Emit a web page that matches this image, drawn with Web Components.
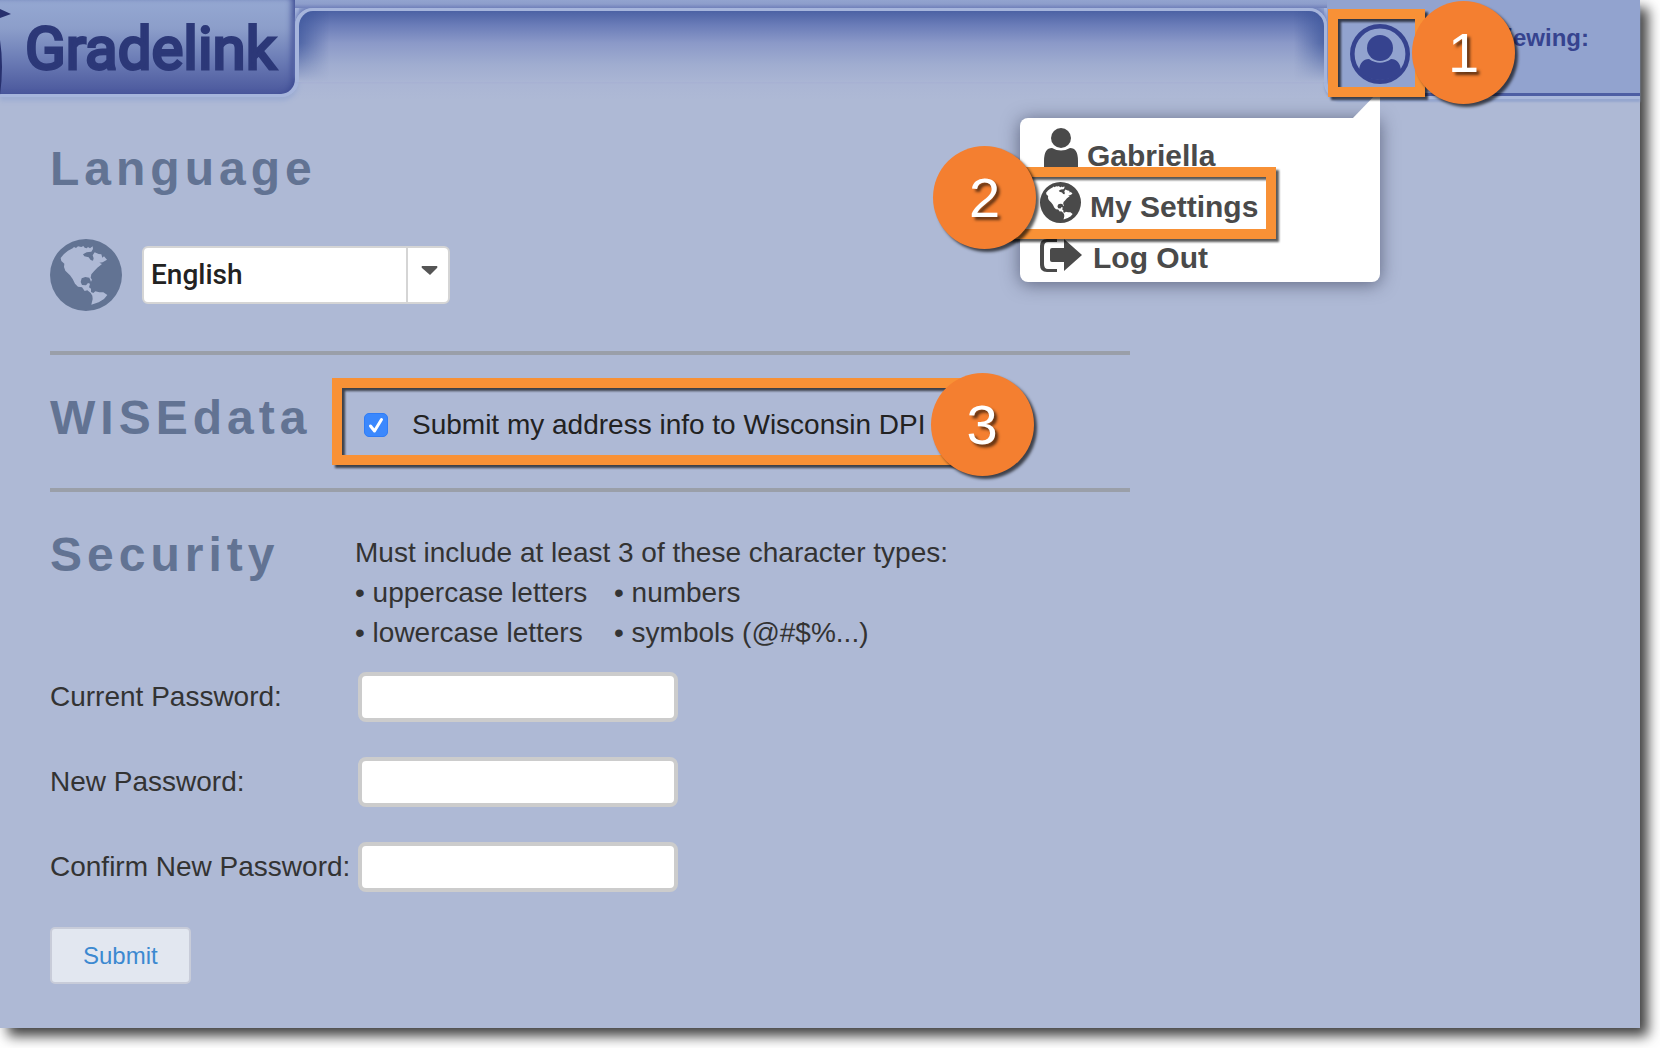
<!DOCTYPE html>
<html lang="en">
<head>
<meta charset="utf-8">
<title>Gradelink – My Settings</title>
<style>
  body { margin: 0; background: #fff; font-family: "Liberation Sans", Arial, Helvetica, sans-serif; color: #333; overflow-x: hidden; }
</style>
</head>
<body>
<settings-app></settings-app>
<script>
const define = (name, html) => {
  const t = document.createElement('template');
  t.innerHTML = html;
  customElements.define(name, class extends HTMLElement {
    constructor() {
      super();
      this.attachShadow({ mode: 'open' }).append(t.content.cloneNode(true));
    }
  });
};

/* Western-hemisphere globe, continents cut out of the disc */
define('globe-icon', `
  <style>:host{display:block;flex:none} svg{display:block;width:100%;height:100%;fill:currentColor}</style>
  <svg viewBox="0 0 216 216" aria-hidden="true"><path fill-rule="evenodd" d="M108 0A108 108 0 1 1 108 216A108 108 0 1 1 108 0Z
  M32 57L42 45L54 35L68 28L72 24L78 27L84 22L94 24L100 21L104 26L110 28L114 24L120 28L128 22L129 30L124 38L110 40L99 46L103 52L116 55L122 63L129 65L131 58L128 49L134 40L146 45L154 46L157 56L162 52L171 62L158 70L148 71L156 75L142 86L132 97L124 106L122 116L126 122L123 128L118 116L106 114L95 118L92 129L96 138L108 139L114 132L120 134L117 145L123 149L123 159L130 162L136 157L148 160L160 160L172 168L162 180L146 190L124 197L128 180L127 170L122 162L112 154L104 156L96 145L84 143L75 134L68 120L60 109L46 95L42 84L43 74L34 66Z"/></svg>`);

define('callout-mark', `
  <style>
    :host{display:block;position:relative;width:max-content}
    .frame{position:absolute;inset:var(--frame);border:10px solid #f89136;filter:drop-shadow(3px 3px 1px rgba(0,0,0,.65));pointer-events:none}
    .badge{position:absolute;top:var(--badge-top);left:var(--badge-left,auto);right:var(--badge-right,auto);width:103px;height:103px;border-radius:50%;
      display:flex;align-items:center;justify-content:center;background:#f47f30;color:#fff;font-size:56px;line-height:64px;font-weight:400;
      text-shadow:3px 3px 3px rgba(0,0,0,.6);box-shadow:3px 3px 3px rgba(0,0,0,.65);pointer-events:none}
  </style>
  <slot></slot><div class="frame"></div><div class="badge"><slot name="number"></slot></div>`);

define('brand-logo', `
  <style>
    :host{display:flex;align-items:center;position:relative;box-sizing:border-box;width:299px;height:97px;padding-left:25px;
      background:linear-gradient(#95a8d2,#8c9eca 30%,#6f80b8 60%,#4a579c);border:solid #a6b5dc;border-width:0 4px 3px 0;border-radius:0 0 18px 0;
      box-shadow:inset -6px 0 6px -3px #3d4b93,0 4px 4px #9dadd3}
    a{font:400 60px/96px Roboto,sans-serif;color:#2c3878;-webkit-text-stroke:3px #2c3878;text-decoration:none;padding-top:4px}
    svg{position:absolute;left:0;top:0;width:12px;height:95px}
  </style>
  <svg viewBox="0 0 12 95" aria-hidden="true"><path fill="#27306e" d="M0 9L11 14L0 18Z M0 40Q4 66 0 95Z"/></svg>
  <a href="#">Gradelink</a>`);

define('menu-item', `
  <style>
    :host{display:block;width:max-content}
    a{display:flex;gap:9px;height:51px;color:#4a4a4a;text-decoration:none;font-weight:700;font-size:30px;line-height:51px}
  </style>
  <a href="#"><slot name="icon"></slot><slot></slot></a>`);

define('user-menu', `
  <style>
    :host{display:block;box-sizing:border-box;width:360px;height:164px;padding:12px 0 0 20px;background:#fff;border-radius:8px 0 8px 8px;box-shadow:0 2px 18px rgba(40,45,70,.6)}
    .tip{position:absolute;right:0;top:-28px;width:28px;height:29px;background:#fff;clip-path:polygon(100% 0,100% 100%,0 100%)}
    svg{display:block;height:51px;fill:#4a4a4a;overflow:visible}
    globe-icon{width:41px;height:41px;margin-top:1px;color:#4a4a4a}
    callout-mark{--frame:-14px -18px -7px -40px;--badge-top:-35px;--badge-left:-107px;z-index:1}
  </style>
  <div class="tip"></div>
  <menu-item><svg slot="icon" width="38" viewBox="0 0 38 51" aria-hidden="true"><circle cx="21" cy="8" r="10"/><path d="M4 39V31Q4 18 12 18Q21 23 30 18Q38 18 38 31V39Z"/></svg>Gabriella</menu-item>
  <callout-mark><menu-item><globe-icon slot="icon"></globe-icon>My Settings</menu-item><span slot="number">2</span></callout-mark>
  <menu-item><svg slot="icon" width="44" viewBox="0 0 44 51" aria-hidden="true"><path d="M17 7H7Q0 7 0 14V33Q0 40 7 40H17V37H8Q4 37 4 32V15Q4 10 8 10H17Z M12 16H24V7L42 23L24 39V30H12Q10 30 10 28V18Q10 16 12 16Z"/></svg>Log Out</menu-item>`);

define('app-header', `
  <style>
    :host{display:flex;position:relative;z-index:2;height:106px;
      background:linear-gradient(#92a3cf,#92a3cf) 0 0/100% 30px no-repeat,linear-gradient(#aab5d4,#aeb9d5) 0 82px/100% 18px no-repeat}
    .recess{flex:1;height:74px;box-sizing:border-box;margin:8px -3px 0 -4px;border:solid #a6b5dc;border-width:3px 3px 0 4px;border-radius:18px 18px 0 0;
      background:linear-gradient(#4c62a4,#6a7cb8 14px,#8b99c8 32px,#a0add0 54px,#aab5d4 71px);
      box-shadow:0 -3px 4px #6f7fba;position:relative}
    .recess::before{content:"";position:absolute;inset:0;border-radius:15px 15px 0 0;
      background:linear-gradient(90deg,rgba(60,85,155,.75),rgba(60,85,155,0) 30px,rgba(60,85,155,0) calc(100% - 30px),rgba(60,85,155,.75));
      -webkit-mask-image:linear-gradient(#000 45%,transparent)}
    .recess::after{content:"";position:absolute;inset:-11px -3px auto -4px;height:8px;background:linear-gradient(#92a3cf,#8d9dcb 50%,#7080ba)}
    .user{display:flex;align-items:flex-start;justify-content:space-between;box-sizing:border-box;width:316px;height:96px;padding:24px 51px 0 23px;
      background:#92a3cf;border:solid #4d5ea4;border-left-color:#a6b5dc;border-width:0 0 3px 3px;border-radius:0 0 0 16px;box-shadow:0 3px 0 #a9b8dc,0 6px 2px #95a6cf}
    .anchor{position:relative;z-index:1}
    user-menu{position:absolute;top:94px;right:30px}
    callout-mark{--frame:-15px -15px -13px -22px;--badge-top:-23px;--badge-right:-105px;z-index:3}
    button{display:block;padding:0;border:0;background:none;width:60px;height:60px}
    button svg{display:block}
    .view{font-weight:700;font-size:24px;line-height:28px;color:#36438f}
  </style>
  <brand-logo></brand-logo>
  <div class="recess"></div>
  <div class="user">
    <div class="anchor">
      <user-menu></user-menu>
      <callout-mark>
        <button type="button" aria-label="Account"><svg width="60" height="60" viewBox="0 0 60 60" fill="#36438f" aria-hidden="true"><circle cx="30" cy="30" r="27.7" fill="none" stroke="#36438f" stroke-width="4.6"/><circle cx="30" cy="24" r="13"/><path d="M9 46C10 39 13 35 19 35Q30 42.500 41 35C47 35 50 39 51 46A27 27 0 0 1 9 46Z"/></svg></button>
        <span slot="number">1</span>
      </callout-mark>
    </div>
    <span class="view">Viewing:</span>
  </div>`);

define('settings-section', `
  <style>
    :host{display:block;padding:35px 0 39px;border-bottom:4px solid #9a9fa9}
    :host([last]){border:0;padding-bottom:0}
    .top{display:grid;grid-template-columns:305px 1fr}
    h2{margin:0;font-size:48px;line-height:56px;font-weight:700;letter-spacing:5px;color:#627393}
  </style>
  <div class="top"><h2><slot name="title"></slot></h2><slot name="aside"></slot></div><slot></slot>`);

define('language-picker', `
  <style>
    :host{display:flex;align-items:center;gap:20px;margin:42px 0 40px}
    :host{margin-bottom:1px}
    globe-icon{width:72px;height:72px;color:#627393}
    .box{position:relative}
    select{appearance:none;display:block;box-sizing:border-box;width:308px;height:58px;padding:0 52px 0 7px;border:2px solid #d5d5d5;border-radius:6px;background:#fff;color:#222;font:500 28px/32px Roboto,sans-serif}
    svg{position:absolute;right:0;top:0;pointer-events:none}
  </style>
  <globe-icon></globe-icon>
  <div class="box"><select aria-label="Language"><option>English</option></select>
  <svg width="44" height="58" viewBox="0 0 44 58" aria-hidden="true"><path fill="#d5d5d5" d="M0 2h2v54h-2z"/><path fill="#555" d="M16 20H31Q32 21 31 22L24 29L16 22Q15 21 16 20Z"/></svg></div>`);

define('consent-check', `
  <style>
    :host{display:block;padding:15px 0 4px 9px}
    callout-mark{--frame:-27px -50px -20px -32px;--badge-top:-32px;--badge-right:-108px}
    label{display:flex;align-items:center;gap:24px;font-size:28px;line-height:40px;color:#222}
    .tick{position:relative;width:24px;height:24px}
    input{appearance:none;display:block;margin:0;width:24px;height:24px;border-radius:5px;border:1px solid #2f7cf6;background:#3b88fd}
    svg{position:absolute;left:0;top:0;display:none;pointer-events:none}
    input:checked + svg{display:block}
  </style>
  <callout-mark>
    <label><span class="tick"><input type="checkbox" checked><svg width="24" height="24" viewBox="0 0 24 24" fill="none" stroke="#fff" stroke-width="3" stroke-linecap="round" stroke-linejoin="round" aria-hidden="true"><path d="M6.500 13L10.500 18L17.500 6.500"/></svg></span>Submit my address info to Wisconsin DPI</label>
    <span slot="number">3</span>
  </callout-mark>`);

define('password-rules', `
  <style>
    :host{display:block;padding-top:6px;font-size:28px;line-height:40px}
    p{margin:0}
    ul{list-style:none;margin:0;padding:0;display:grid;grid-template-columns:259px max-content}
  </style>
  <p>Must include at least 3 of these character types:</p>
  <ul><li>• uppercase letters</li><li>• numbers</li><li>• lowercase letters</li><li>• symbols (@#$%...)</li></ul>`);

define('password-form', `
  <style>
    :host{display:block}
    form{display:flex;flex-direction:column;align-items:flex-start;gap:35px;padding:19px 0 44px}
    div{display:flex;align-items:center;gap:8px}
    label{min-width:300px;font-size:28px;line-height:40px}
    input{box-sizing:border-box;width:320px;height:50px;border:4px solid #ccc;border-radius:8px;background:#fff;font-size:28px;padding:0 8px}
    button{box-sizing:border-box;height:57px;padding:0 31px;border:2px solid #c8ccd9;border-radius:5px;background:#e2e7f0;color:#3c89d0;font:24px/28px "Liberation Sans",Arial,sans-serif}
  </style>
  <form>
    <div><label for="cur">Current Password:</label><input id="cur" type="password"></div>
    <div><label for="new">New Password:</label><input id="new" type="password"></div>
    <div><label for="conf">Confirm New Password:</label><input id="conf" type="password"></div>
    <button type="button">Submit</button>
  </form>`);

define('settings-app', `
  <style>
    :host{display:block;margin:0 20px 20px 0;background:#aeb9d5;box-shadow:8px 8px 12px rgba(0,0,0,.75)}
    main{max-width:1080px;padding-left:50px}
  </style>
  <app-header></app-header>
  <main>
    <settings-section><span slot="title">Language</span><language-picker></language-picker></settings-section>
    <settings-section><span slot="title">WISEdata</span><consent-check slot="aside"></consent-check></settings-section>
    <settings-section last><span slot="title">Security</span><password-rules slot="aside"></password-rules><password-form></password-form></settings-section>
  </main>`);
</script>
</body>
</html>
